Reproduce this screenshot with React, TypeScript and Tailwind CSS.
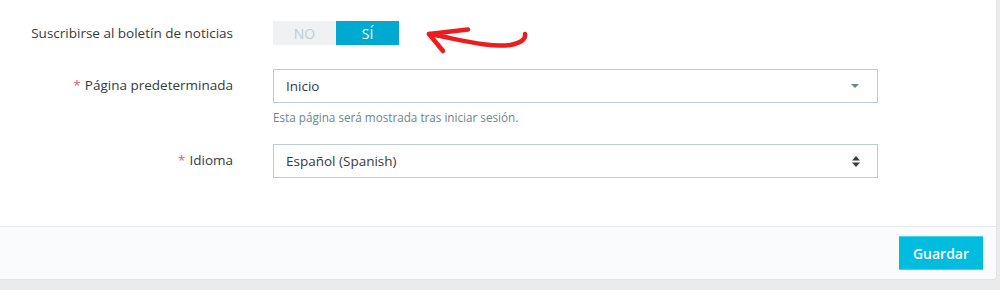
import React from "react";

const font = { fontFamily: '"Open Sans", "Noto Sans", sans-serif' };

const Arrow: React.FC = () => (
  <svg
    className="absolute left-[420px] top-[22px]"
    width="115"
    height="40"
    viewBox="420 22 115 40"
    fill="none"
  >
    <path
      d="M429 34 C458 39, 488 48, 510 45 C521 43, 526 39, 525 34"
      stroke="#ee1c1c"
      strokeWidth="4.5"
      strokeLinecap="round"
    />
    <path
      d="M468 29.5 L429 34 L443 51"
      stroke="#ee1c1c"
      strokeWidth="4.5"
      strokeLinecap="round"
      strokeLinejoin="round"
    />
  </svg>
);

const Row: React.FC<{ label: string; required?: boolean; children: React.ReactNode }> = ({
  label,
  required,
  children,
}) => (
  <div className="flex items-start">
    <div className="w-[233px] shrink-0 flex justify-end items-center h-[33px] text-[13.5px] text-[#363a41]">
      {required && <span className="text-[#e5586b] mr-[4px]">*</span>}
      {label}
    </div>
    <div className="pl-[40px]">{children}</div>
  </div>
);

const Select: React.FC<{ value: string; double?: boolean }> = ({ value, double }) => (
  <div className="w-[605px] h-[34px] border border-[#bbcdd2] bg-white flex items-center justify-between pl-[12px] pr-[16px] text-[13.5px] text-[#363a41]">
    <span>{value}</span>
    {double ? (
      <svg width="8" height="11" viewBox="0 0 8 11" className="mr-[1px]">
        <path d="M0 4.5 L4 0 L8 4.5 Z" fill="#363a41" />
        <path d="M0 6.5 L4 11 L8 6.5 Z" fill="#363a41" />
      </svg>
    ) : (
      <svg width="8" height="4" viewBox="0 0 8 4" className="mr-[2px]">
        <path d="M0 0 L8 0 L4 4 Z" fill="#6c868e" />
      </svg>
    )}
  </div>
);

export default function App() {
  return (
    <div className="w-[1000px] h-[290px] bg-[#e9ebec] overflow-hidden" style={font}>
      <div className="relative w-[997px] h-[280px] bg-white rounded-br-[4px] border-r border-b border-[#dfe4e6] flex flex-col">
        <div className="flex-1 pt-[21px] flex flex-col">
          <div className="flex items-center">
            <div className="w-[233px] shrink-0 text-right text-[13.5px] text-[#363a41]">
              Suscribirse al boletín de noticias
            </div>
            <div className="pl-[40px]">
              <div className="flex h-[24px] w-[126px] text-[14px]">
                <div className="w-[63px] bg-[#eff1f2] text-[#bbcdd2] flex items-center justify-center">
                  NO
                </div>
                <div className="w-[63px] bg-[#00a9cf] text-white flex items-center justify-center">
                  SÍ
                </div>
              </div>
            </div>
          </div>

          <div className="mt-[24px]">
            <Row label="Página predeterminada" required>
              <Select value="Inicio" />
              <div className="mt-[6px] text-[11.7px] text-[#6c868e] leading-[16px]">
                Esta página será mostrada tras iniciar sesión.
              </div>
            </Row>
          </div>

          <div className="mt-[19px]">
            <Row label="Idioma" required>
              <Select value="Español (Spanish)" double />
            </Row>
          </div>
        </div>

        <div className="h-[53px] border-t border-[#e4ebed] bg-[#fafbfc] rounded-br-[4px] flex items-center justify-end pr-[13px]">
          <button className="h-[34px] w-[84px] bg-[#00bcdf] border-y border-[#48d3ec] text-white text-[14px] font-semibold">
            Guardar
          </button>
        </div>

        <Arrow />
      </div>
    </div>
  );
}
